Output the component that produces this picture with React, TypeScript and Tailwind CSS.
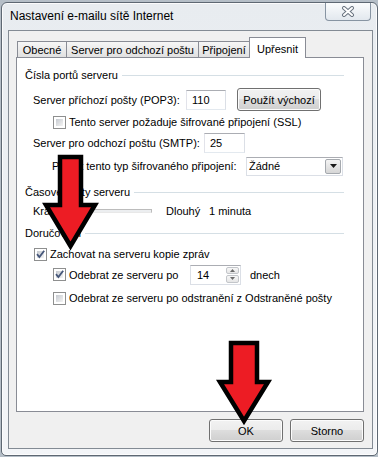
import React from "react";

type BoxProps = { checked?: boolean };
type TextProps = { value: string; className: string };
type LabelProps = { label: string; className?: string };

const CheckBox = ({ checked }: BoxProps) => (
  <span className="relative flex h-[13px] w-[13px] shrink-0 border border-[#8e8f8f] bg-white p-[2px]">
    <span className="h-full w-full bg-gradient-to-br from-[#c6cad0] to-[#f4f4f4]" />
    {checked && (
      <svg className="absolute left-0 top-0" width="11" height="11" viewBox="0 0 11 11">
        <path d="M2 5.2 L4.4 8 L9.2 1.8" fill="none" stroke="#46577a" strokeWidth="1.8" />
      </svg>
    )}
  </span>
);

const CheckRow = ({ checked, label }: BoxProps & { label: string }) => (
  <div className="flex items-center">
    <CheckBox checked={checked} />
    <span className="ml-[3px] whitespace-nowrap">{label}</span>
  </div>
);

const TextBox = ({ value, className }: TextProps) => (
  <div
    className={
      "flex h-[20px] items-center border border-[#dbdfe6] border-b-[#e3e9ef] border-l-[#e2e3ea] border-t-[#abadb3] bg-white pl-[5px] " +
      className
    }
  >
    {value}
  </div>
);

const Button = ({ label, className }: LabelProps) => (
  <div
    className={
      "flex items-center justify-center rounded-[3px] border border-[#707070] bg-[linear-gradient(#f2f2f2_0%,#ebebeb_50%,#dddddd_50%,#cfcfcf_100%)] shadow-[inset_0_0_0_1px_#fcfcfc] " +
      className
    }
  >
    {label}
  </div>
);

const Group = ({ label, className }: LabelProps) => (
  <div className={"flex h-[16px] items-center " + className}>
    <span className="whitespace-nowrap">{label}</span>
    <span className="ml-[4px] h-px flex-1 bg-[#d5dfe5]" />
  </div>
);

const Tab = ({ label, className }: LabelProps) => (
  <div
    className={
      "flex h-[16px] items-center justify-center whitespace-nowrap border border-b-0 border-[#898c95] bg-gradient-to-b from-[#f6f6f6] to-[#e1e1e1] pt-px " +
      className
    }
  >
    {label}
  </div>
);

export default function App() {
  return (
    <div className="relative h-[457px] w-[378px] overflow-hidden bg-[#b5bec7] pl-px pt-[2px] text-[11px] leading-[16px] text-black [font-family:'Liberation_Sans',Arial,sans-serif]">
      <div className="flex h-[454px] w-[377px] flex-col rounded-b-[5px] rounded-t-[6px] border border-[#5e6873] bg-gradient-to-b from-[#e8ecf0] to-[#f3f5f8] shadow-[inset_0_0_0_1px_rgba(255,255,255,0.8)]">
        {/* title bar */}
        <div className="flex h-[27px] shrink-0 justify-between">
          <span className="pl-[8px] pt-[5px] text-[12px]">Nastavení e-mailu sítě Internet</span>
          <div className="mr-[6px] flex h-[18px] w-[46px] items-center justify-center rounded-b-[4px] border border-t-0 border-[#8794a2] bg-gradient-to-b from-[#fbfcfd] to-[#e2e8ee]">
            <svg width="14" height="11" viewBox="0 0 14 11">
              <path d="M3 2 L11 9 M11 2 L3 9" stroke="#6a7480" strokeWidth="4" strokeLinecap="round" />
              <path d="M3 2 L11 9 M11 2 L3 9" stroke="#ffffff" strokeWidth="2" strokeLinecap="round" />
            </svg>
          </div>
        </div>

        {/* client area */}
        <div className="ml-[6px] mr-[4px] flex h-[419px] flex-col border border-[#838b94] bg-[#f0f0f0]">
          <div className="mt-[6px] flex h-[20px] items-end pl-[8px]">
            <Tab label="Obecné" className="w-[50px]" />
            <Tab label="Server pro odchozí poštu" className="-ml-px w-[133px]" />
            <Tab label="Připojení" className="-ml-px w-[52px]" />
            <div className="relative z-10 -mb-px -ml-px flex h-[21px] w-[57px] items-start justify-center border border-b-0 border-[#898c95] bg-white pt-[3px]">
              Upřesnit
            </div>
          </div>

          <div className="ml-[7px] flex h-[355px] w-[348px] flex-col border border-[#898c95] bg-white pl-[8px] pr-[19px]">
            <Group label="Čísla portů serveru" className="mt-[9px]" />

            <div className="mt-[5px] flex h-[23px] items-center">
              <span className="ml-[8px] w-[153px] whitespace-nowrap">Server příchozí pošty (POP3):</span>
              <TextBox value="110" className="w-[40px]" />
              <Button label="Použít výchozí" className="ml-[11px] h-[23px] w-[84px]" />
            </div>

            <div className="ml-[28px] mt-[3px] flex h-[16px] items-center">
              <CheckRow label="Tento server požaduje šifrované připojení (SSL)" />
            </div>

            <div className="mt-[2px] flex h-[21px] items-center">
              <span className="ml-[8px] w-[171px] whitespace-nowrap">Server pro odchozí poštu (SMTP):</span>
              <TextBox value="25" className="w-[41px]" />
            </div>

            <div className="mt-[3px] flex h-[20px] items-center">
              <span className="ml-[27px] w-[194px] whitespace-nowrap">Použít tento typ šifrovaného připojení:</span>
              <div className="flex h-[19px] w-[97px] items-center justify-between border border-[#dbdfe6] border-t-[#abadb3] bg-white pl-[2px] pr-px">
                <span>Žádné</span>
                <span className="flex h-[15px] w-[16px] items-center justify-center rounded-[2px] border border-[#a5a9ae] bg-gradient-to-b from-[#f4f4f4] to-[#d6d6d6]">
                  <svg width="7" height="4" viewBox="0 0 7 4">
                    <path d="M0 0 H7 L3.5 4 Z" fill="#1a1a1a" />
                  </svg>
                </span>
              </div>
            </div>

            <Group label="Časové limity serveru" className="mt-[8px]" />

            <div className="mt-[3px] flex h-[16px] items-center">
              <span className="ml-[8px] w-[37px]">Krátký</span>
              <span className="h-[4px] w-[82px] border border-[#bcbcbc] border-b-[#e8e8e8] bg-[#eceef0]" />
              <span className="ml-[14px] w-[43px]">Dlouhý</span>
              <span>1 minuta</span>
            </div>

            <Group label="Doručování" className="mt-[6px]" />

            <div className="ml-[9px] mt-[5px] flex h-[16px] items-center">
              <CheckRow checked label="Zachovat na serveru kopie zpráv" />
            </div>

            <div className="mt-[2px] flex h-[21px] items-center">
              <div className="ml-[28px] w-[137px]">
                <CheckRow checked label="Odebrat ze serveru po" />
              </div>
              <div className="flex h-[20px] w-[51px] border border-[#dbdfe6] border-t-[#abadb3] bg-white">
                <span className="flex flex-1 items-center pl-[6px]">14</span>
                <span className="flex w-[15px] flex-col gap-px p-px">
                  <span className="flex flex-1 items-center justify-center rounded-[2px] border border-[#c3c6ca] bg-gradient-to-b from-[#f7f7f7] to-[#e6e6e6]">
                    <svg width="5" height="3" viewBox="0 0 5 3">
                      <path d="M0 3 H5 L2.5 0 Z" fill="#6b6b6b" />
                    </svg>
                  </span>
                  <span className="flex flex-1 items-center justify-center rounded-[2px] border border-[#c3c6ca] bg-gradient-to-b from-[#f7f7f7] to-[#e6e6e6]">
                    <svg width="5" height="3" viewBox="0 0 5 3">
                      <path d="M0 0 H5 L2.5 3 Z" fill="#6b6b6b" />
                    </svg>
                  </span>
                </span>
              </div>
              <span className="ml-[9px]">dnech</span>
            </div>

            <div className="ml-[28px] mt-[5px] flex h-[16px] items-center">
              <CheckRow label="Odebrat ze serveru po odstranění z Odstraněné pošty" />
            </div>
          </div>

          <div className="mt-[7px] flex justify-end gap-[7px] pr-[8px]">
            <Button label="OK" className="h-[23px] w-[74px]" />
            <Button label="Storno" className="h-[23px] w-[74px]" />
          </div>
        </div>
      </div>

      {/* red arrows drawn over the dialog */}
      <svg className="pointer-events-none absolute left-0 top-0" width="378" height="457" viewBox="0 0 378 457">
        <polygon
          points="60,157 81,157 81,205 95,205 70.5,246 46,205 60,205"
          fill="#ed1c24"
          stroke="#000"
          strokeWidth="4.5"
          strokeMiterlimit="10"
        />
        <polygon
          points="231,343 257,343 257,382 268,382 244,421 220,382 231,382"
          fill="#ed1c24"
          stroke="#000"
          strokeWidth="4.5"
          strokeMiterlimit="10"
        />
      </svg>
    </div>
  );
}
